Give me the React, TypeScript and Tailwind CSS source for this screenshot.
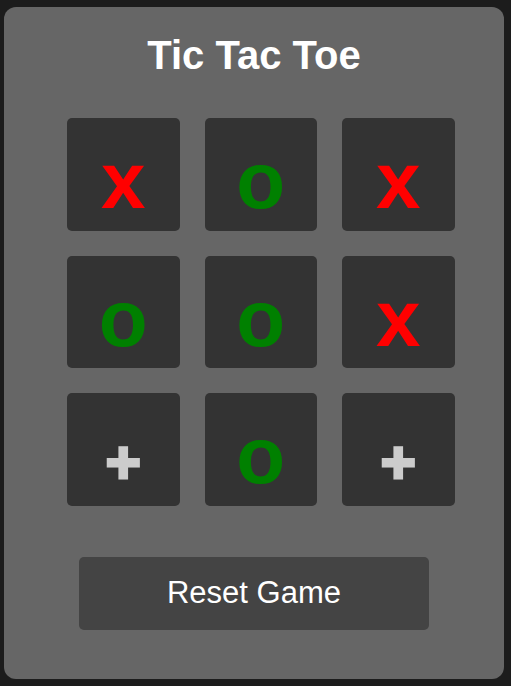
const board: ("x" | "o" | null)[] = ["x", "o", "x", "o", "o", "x", null, "o", null];

export default function App() {
  return (
    <div className="min-h-[686px] w-full bg-[#1c1c1c] pt-[7px] pl-[4px] font-['Liberation_Sans',Arial,sans-serif]">
      <div className="flex h-[672px] w-[500px] flex-col rounded-[12px] bg-[#666666] pt-[25px]">
        <h1 className="text-center text-[40px] leading-[46px] font-bold text-white">Tic Tac Toe</h1>

        <div className="mt-[40px] ml-[63px] grid grid-cols-[repeat(3,112.5px)] gap-[25px]">
          {board.map((cell, i) => (
            <div
              key={i}
              className="h-[112.5px] rounded-[5px] bg-[#333333] pt-[23px] text-center text-[80px] leading-none font-bold"
            >
              {cell === "x" && <span className="text-[#ff0000]">x</span>}
              {cell === "o" && <span className="text-[#008000]">o</span>}
              {cell === null && (
                <span className="text-[60px] text-[#cccccc] [-webkit-text-stroke:3px_#cccccc]">+</span>
              )}
            </div>
          ))}
        </div>

        <button className="mx-auto mt-[51.5px] h-[73px] w-[350px] rounded-[5px] bg-[#444444] text-[31px] text-white">
          Reset Game
        </button>
      </div>
    </div>
  );
}
